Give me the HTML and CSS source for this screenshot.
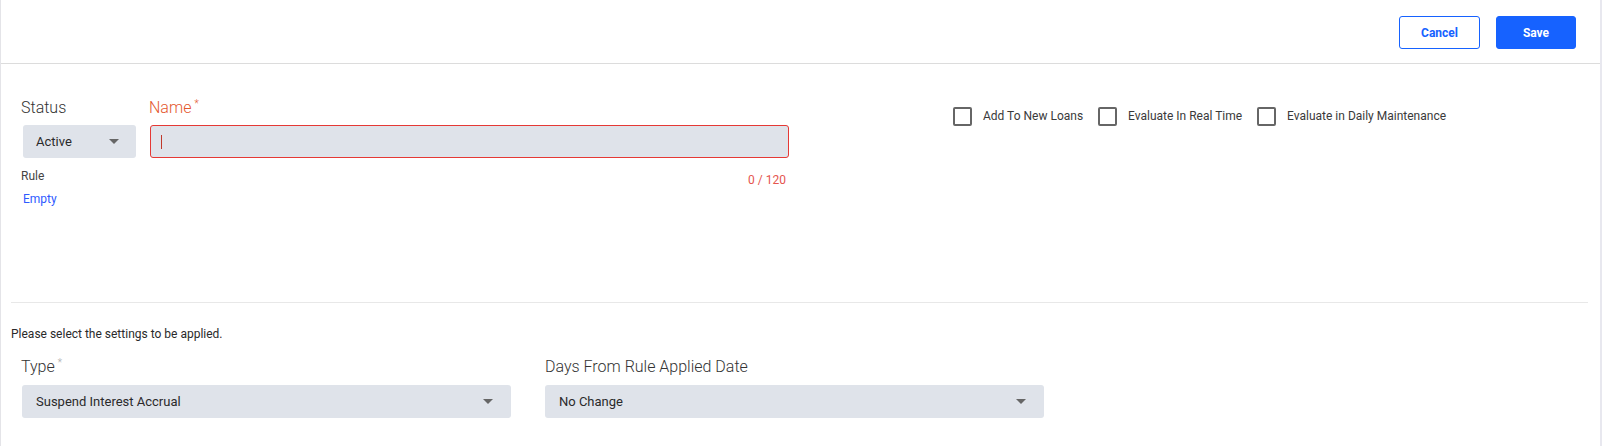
FILE: index.html
```html
<!DOCTYPE html>
<html lang="en">
<head>
    <meta charset="UTF-8">
    <meta name="viewport" content="width=device-width, initial-scale=1.0">
    <title>Rule Settings</title>
    <link rel="stylesheet" href="styles.css">
</head>
<body>
    <div class="page">
        <header class="toolbar">
            <button class="btn btn-outline">Cancel</button>
            <button class="btn btn-primary">Save</button>
        </header>

        <div class="content">
            <section class="rule-section">
                <div class="field status-field">
                    <label class="field-label">Status</label>
                    <div class="select status-select">
                        <span>Active</span>
                        <span class="arrow"></span>
                    </div>
                    <div class="rule-caption">Rule</div>
                    <a class="rule-link" href="#">Empty</a>
                </div>

                <div class="field name-field">
                    <label class="field-label error">Name<span class="req">*</span></label>
                    <div class="text-input error">
                        <span class="caret"></span>
                    </div>
                    <div class="counter">0 / 120</div>
                </div>

                <div class="checks">
                    <label class="check"><span class="box"></span>Add To New Loans</label>
                    <label class="check"><span class="box"></span>Evaluate In Real Time</label>
                    <label class="check"><span class="box"></span>Evaluate in Daily Maintenance</label>
                </div>
            </section>

            <section class="settings-section">
                <p class="hint">Please select the settings to be applied.</p>
                <div class="settings-row">
                    <div class="field type-field">
                        <label class="field-label">Type<span class="req muted">*</span></label>
                        <div class="select">
                            <span>Suspend Interest Accrual</span>
                            <span class="arrow"></span>
                        </div>
                    </div>
                    <div class="field days-field">
                        <label class="field-label">Days From Rule Applied Date</label>
                        <div class="select">
                            <span>No Change</span>
                            <span class="arrow"></span>
                        </div>
                    </div>
                </div>
            </section>
        </div>
    </div>
</body>
</html>
```

FILE: styles.css
```css
body {
    margin: 0;
    background-color: #fff;
    font-family: 'Roboto', 'Liberation Sans', sans-serif;
    color: #333;
}

.page {
    height: 446px;
    border-left: 1px solid #e4e4e8;
    border-right: 2px solid #e8e8ef;
    box-sizing: border-box;
}

/* Toolbar */
.toolbar {
    height: 64px;
    border-bottom: 1px solid #dcdcdc;
    display: flex;
    justify-content: flex-end;
    align-items: flex-start;
    gap: 16px;
    padding: 16px 24px 0 0;
    box-sizing: border-box;
}

.btn {
    width: 81px;
    height: 33px;
    border-radius: 3px;
    font-family: 'Roboto', 'Liberation Sans', sans-serif;
    font-weight: 700;
    font-size: 12px;
    cursor: pointer;
}

.btn-outline {
    background-color: #fff;
    border: 1px solid #1662ff;
    color: #1662ff;
}

.btn-primary {
    width: 80px;
    background-color: #1662ff;
    border: 1px solid #1662ff;
    color: #fff;
}

/* Content */
.content {
    padding: 0 12px 0 10px;
}

.rule-section {
    height: 239px;
    border-bottom: 1px solid #e8e8e8;
    display: flex;
    align-items: flex-start;
    padding: 34px 0 0 10px;
    box-sizing: border-box;
}

.field {
    display: flex;
    flex-direction: column;
}

.field-label {
    font-size: 16px;
    font-weight: 300;
    line-height: 20px;
    color: #333;
    margin-bottom: 7px;
}

.field-label.error {
    color: #e4572e;
}

.req {
    font-size: 10px;
    vertical-align: top;
    margin-left: 3px;
    line-height: 12px;
}

.req.muted {
    color: #aaa;
}

.select {
    height: 33px;
    background-color: #dfe3ea;
    border-radius: 3px;
    display: flex;
    align-items: center;
    justify-content: space-between;
    padding: 0 16px 0 13px;
    box-sizing: border-box;
    font-size: 13px;
    color: #2a2a2a;
}

.arrow {
    width: 0;
    height: 0;
    border-left: 5px solid transparent;
    border-right: 5px solid transparent;
    border-top: 5px solid #666;
}

.status-field {
    width: 127px;
}

.status-select {
    width: 113px;
    margin-left: 2px;
    padding-right: 17px;
}

.rule-caption {
    font-size: 12px;
    line-height: 16px;
    margin-top: 10px;
    color: #444;
}

.rule-link {
    font-size: 12px;
    line-height: 16px;
    margin-top: 7px;
    margin-left: 2px;
    color: #2e5bff;
    text-decoration: none;
}

.name-field {
    width: 639px;
    margin-left: 2px;
}

.name-field .field-label {
    margin-left: -1px;
}

.text-input {
    height: 33px;
    background-color: #dfe3ea;
    border-radius: 3px;
    box-sizing: border-box;
    display: flex;
    align-items: center;
    padding-left: 10px;
}

.text-input.error {
    border: 1px solid #e53935;
}

.caret {
    width: 1px;
    height: 14px;
    background-color: #c0392b;
}

.counter {
    font-size: 12px;
    line-height: 16px;
    margin-top: 14px;
    text-align: right;
    padding-right: 3px;
    color: #e5554f;
}

/* Checkboxes */
.checks {
    display: flex;
    align-items: center;
    margin: 8px 0 0 164px;
    height: 20px;
}

.check {
    display: flex;
    align-items: center;
    font-size: 12px;
    color: #3a3a3a;
    margin-right: 15px;
}

.box {
    width: 19px;
    height: 19px;
    border: 2px solid #666;
    border-radius: 2px;
    box-sizing: border-box;
    margin-right: 11px;
}

/* Settings */
.settings-section {
    padding-top: 23px;
}

.hint {
    margin: 0;
    font-size: 12px;
    line-height: 16px;
    color: #2a2a2a;
}

.settings-row {
    display: flex;
    margin-top: 15px;
    padding-left: 11px;
}

.type-field {
    width: 489px;
}

.type-field .field-label {
    margin-left: -1px;
}

.type-field .field-label,
.days-field .field-label {
    margin-bottom: 8px;
}

.days-field {
    width: 499px;
    margin-left: 34px;
}

.type-field .select,
.days-field .select {
    padding-left: 14px;
    padding-right: 18px;
}
```
